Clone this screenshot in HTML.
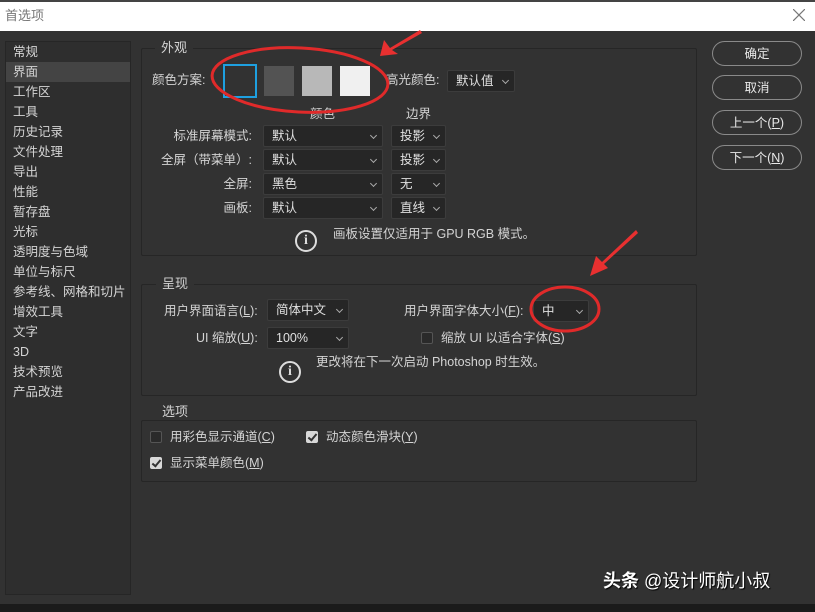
<!DOCTYPE html>
<html><head><meta charset="utf-8"><style>
*{margin:0;padding:0;box-sizing:border-box}
body{width:815px;height:612px;overflow:hidden;background:#323232;font-family:"Liberation Sans","Noto Sans CJK SC",sans-serif;font-size:12.5px;line-height:16px;color:#d4d4d4;position:relative}
.a{position:absolute;white-space:nowrap}
.title{left:0;top:0;width:815px;height:31px;background:#fff;border-top:2px solid #444}
.side{left:5px;top:41px;width:126px;height:554px;background:#2e2e2e;border:1px solid #262626}
.side div{height:20px;line-height:20px;padding-left:7px;font-size:12.5px}
.side .sel{background:#444}
.grp{border:1px solid #262626;border-radius:2px}
.leg{background:#323232;padding:0 6px;font-size:13px}
.sel2{background:#262626;border:1px solid #3c3c3c;border-radius:2px;height:22px;display:flex;align-items:center;padding-left:8px;font-size:12.5px;color:#e0e0e0}
.sel2:after{content:"";position:absolute;right:6px;top:7px;width:4px;height:4px;border-right:1px solid #aaa;border-bottom:1px solid #aaa;transform:rotate(45deg)}
.btn{left:712px;width:90px;height:25px;border:1.5px solid #8a8a8a;border-radius:13px;display:flex;align-items:center;justify-content:center;font-size:12.5px;color:#e8e8e8}
.lbl{text-align:right}
.info{width:22px;height:22px;border:2px solid #ddd;border-radius:50%;text-align:center;line-height:18px;font-weight:bold;font-size:14px;color:#ddd;font-family:"Liberation Serif",serif}
.cb{width:12px;height:12px;border:1px solid #555;background:#2a2a2a;border-radius:2px}
.cb.on{background:#d8d8d8;border-color:#d8d8d8}
.cb.on:after{content:"";position:absolute;left:3px;top:0px;width:3px;height:7px;border-right:2px solid #333;border-bottom:2px solid #333;transform:rotate(40deg)}
</style></head><body>
<div class="a title"></div>
<div class="a" style="left:5px;top:8px;color:#777;font-size:13px">首选项</div>
<svg class="a" style="left:793px;top:9px" width="12" height="12"><path d="M0 0L12 12M12 0L0 12" stroke="#777" stroke-width="1.2"/></svg>
<div class="a" style="left:0;top:604px;width:815px;height:8px;background:#1b1b1b"></div>

<div class="a side">
<div>常规</div><div class="sel">界面</div><div>工作区</div><div>工具</div><div>历史记录</div><div>文件处理</div><div>导出</div><div>性能</div><div>暂存盘</div><div>光标</div><div>透明度与色域</div><div>单位与标尺</div><div>参考线、网格和切片</div><div>增效工具</div><div>文字</div><div>3D</div><div>技术预览</div><div>产品改进</div>
</div>

<div class="a grp" style="left:141px;top:48px;width:556px;height:208px"></div>
<div class="a leg" style="left:155px;top:40px">外观</div>
<div class="a" style="left:152px;top:72px">颜色方案:</div>
<div class="a" style="left:223px;top:64px;width:34px;height:34px;border:2px solid #1ea0e0;background:#323232"></div>
<div class="a" style="left:264px;top:66px;width:30px;height:30px;background:#535353"></div>
<div class="a" style="left:302px;top:66px;width:30px;height:30px;background:#b8b8b8"></div>
<div class="a" style="left:340px;top:66px;width:30px;height:30px;background:#f0f0f0"></div>
<div class="a" style="left:386px;top:72px">高光颜色:</div>
<div class="a sel2" style="left:447px;top:70px;width:68px">默认值</div>
<div class="a" style="left:310px;top:106px">颜色</div>
<div class="a" style="left:406px;top:106px">边界</div>
<div class="a lbl" style="left:150px;width:102px;top:128px">标准屏幕模式:</div>
<div class="a lbl" style="left:150px;width:102px;top:152px">全屏（带菜单）:</div>
<div class="a lbl" style="left:150px;width:102px;top:176px">全屏:</div>
<div class="a lbl" style="left:150px;width:102px;top:200px">画板:</div>
<div class="a sel2" style="left:263px;top:125px;width:120px">默认</div>
<div class="a sel2" style="left:263px;top:149px;width:120px">默认</div>
<div class="a sel2" style="left:263px;top:173px;width:120px">黑色</div>
<div class="a sel2" style="left:263px;top:197px;width:120px">默认</div>
<div class="a sel2" style="left:391px;top:125px;width:55px">投影</div>
<div class="a sel2" style="left:391px;top:149px;width:55px">投影</div>
<div class="a sel2" style="left:391px;top:173px;width:55px">无</div>
<div class="a sel2" style="left:391px;top:197px;width:55px">直线</div>
<div class="a info" style="left:295px;top:230px">i</div>
<div class="a" style="left:333px;top:226px">画板设置仅适用于 GPU RGB 模式。</div>

<div class="a grp" style="left:141px;top:284px;width:556px;height:112px"></div>
<div class="a leg" style="left:156px;top:276px">呈现</div>
<div class="a" style="left:164px;top:303px">用户界面语言(<u>L</u>):</div>
<div class="a sel2" style="left:267px;top:299px;width:82px">简体中文</div>
<div class="a" style="left:404px;top:303px">用户界面字体大小(<u>F</u>):</div>
<div class="a sel2" style="left:533px;top:300px;width:56px">中</div>
<div class="a" style="left:196px;top:330px">UI 缩放(<u>U</u>):</div>
<div class="a sel2" style="left:267px;top:327px;width:82px">100%</div>
<div class="a cb" style="left:421px;top:332px"></div>
<div class="a" style="left:441px;top:330px">缩放 UI 以适合字体(<u>S</u>)</div>
<div class="a info" style="left:279px;top:361px">i</div>
<div class="a" style="left:316px;top:354px">更改将在下一次启动 Photoshop 时生效。</div>

<div class="a grp" style="left:141px;top:420px;width:556px;height:62px"></div>
<div class="a leg" style="left:156px;top:404px">选项</div>
<div class="a cb" style="left:150px;top:431px"></div>
<div class="a" style="left:170px;top:429px">用彩色显示通道(<u>C</u>)</div>
<div class="a cb on" style="left:306px;top:431px"></div>
<div class="a" style="left:326px;top:429px">动态颜色滑块(<u>Y</u>)</div>
<div class="a cb on" style="left:150px;top:457px"></div>
<div class="a" style="left:170px;top:455px">显示菜单颜色(<u>M</u>)</div>

<div class="a btn" style="top:41px">确定</div>
<div class="a btn" style="top:75px">取消</div>
<div class="a btn" style="top:110px">上一个(<u>P</u>)</div>
<div class="a btn" style="top:145px">下一个(<u>N</u>)</div>

<svg class="a" style="left:0;top:0" width="815" height="612">
<ellipse cx="300" cy="80" rx="88" ry="32" fill="none" stroke="#e02a2a" stroke-width="3" transform="rotate(3 300 80)"/>
<ellipse cx="565" cy="309" rx="34" ry="22" fill="none" stroke="#e02a2a" stroke-width="3"/>
<path d="M420 30 L390 48 L384 40 L380 56 L398 54 L392 50 L422 33Z" fill="#e83030"/>
<path d="M636 230 L602 262 L596 256 L590 276 L608 268 L604 264 L638 233Z" fill="#e83030"/>
</svg>
<div class="a" style="left:603px;top:570px;line-height:22px;font-size:18px;color:#fff;text-shadow:1px 1px 1px #000"><b>头条</b> @设计师航小叔</div>
</body></html>
